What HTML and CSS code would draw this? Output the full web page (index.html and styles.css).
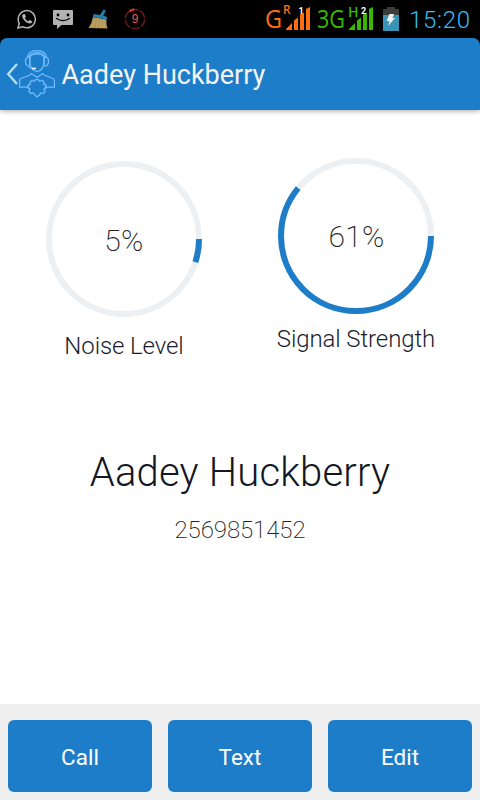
FILE: index.html
```html
<!DOCTYPE html>
<html lang="en">
<head>
    <meta charset="utf-8">
    <title>Aadey Huckberry</title>
    <link rel="stylesheet" href="styles.css">
</head>
<body>
    <div class="status-bar">
        <div class="notifications">
            <!-- WhatsApp -->
            <svg width="20" height="20" viewBox="0 0 20 20">
                <path d="M1 19l1.300-4.600A8.600 8.600 0 1 1 5.600 17.700z" fill="none" stroke="#b4b4b4" stroke-width="1.500"/>
                <path d="M6.600 4.900L5.200 6.300C4.900 10.200 9.500 14.800 13.500 14.600L15.200 13.200V12.200L12.700 10.900L11.400 12.200C9.700 11.600 8.600 10.500 7.900 8.900L8.900 7.700L7.900 5z" fill="#b4b4b4"/>
            </svg>
            <!-- Messaging -->
            <svg width="20" height="20" viewBox="0 0 20 20">
                <path d="M1 1h18a1 1 0 0 1 1 1v13a1 1 0 0 1-1 1H8.500L4 20V16H1a1 1 0 0 1-1-1V2a1 1 0 0 1 1-1z" fill="#b2b2b2"/>
                <circle cx="5" cy="6" r="1.400" fill="#000"/>
                <circle cx="15" cy="6" r="1.400" fill="#000"/>
                <path d="M3 9.300Q10 14 17 9.300" fill="none" stroke="#000" stroke-width="1.300"/>
            </svg>
            <!-- Cleaner -->
            <svg width="20" height="20" viewBox="0 0 20 20">
                <path d="M5 8L18.500 10.500Q18 15 19.500 19.500L.5 19Q4 14 5 8z" fill="#b09556"/>
                <path d="M7 10L4.500 18M10 10L8.500 19M13 11L12.500 19M16 11V19" stroke="#c9b074" stroke-width=".8"/>
                <path d="M5.500 5L12 6L15.500 .5L18 1.500L15.200 6.500L19 8V10.500L5 8z" fill="#2080b0"/>
            </svg>
            <!-- Counter -->
            <svg width="22" height="22" viewBox="0 0 22 22">
                <circle cx="11" cy="11" r="9.600" fill="none" stroke="#6e1719" stroke-width="1.500" stroke-dasharray="8.550 1.500"/>
                <path d="M5.500 3.400A9.600 9.600 0 0 1 10.200 1.400" fill="none" stroke="#e02a2a" stroke-width="2.400"/>
                <text class="counter" x="11" y="15" text-anchor="middle">9</text>
            </svg>
        </div>
        <div class="system">
            <svg width="112" height="38" viewBox="0 0 112 38">
                <g fill="#ff6e0e">
                    <text class="network" x="4" y="27.500" textLength="17" lengthAdjust="spacingAndGlyphs">G</text>
                    <text class="network-sup" x="22" y="14" textLength="7.500" lengthAdjust="spacingAndGlyphs">R</text>
                    <path d="M25 30V29L31 23V30zM33 30V20.500L37 17.500V30zM39 30V14.500L43 12.500V30zM45 30V9L49 7V30z"/>
                </g>
                <text class="sim" x="37.500" y="14">1</text>
                <g fill="#38b800">
                    <text class="network" x="56" y="27.500" textLength="28" lengthAdjust="spacingAndGlyphs">3G</text>
                    <text class="network-sup network-h" x="87" y="17" textLength="10.500" lengthAdjust="spacingAndGlyphs">H</text>
                    <path d="M88 30V29L94 23V30zM96 30V20.500L100 17.500V30zM102 30V14.500L106 12.500V30zM108 30V9L112 7V30z"/>
                </g>
                <text class="sim" x="100" y="14">2</text>
            </svg>
            <svg class="battery" width="16" height="24" viewBox="0 0 16 24">
                <path d="M4 0H12V2H16V24H0V2H4z" fill="#3c3c3c"/>
                <path d="M0 8H16V24H0z" fill="#3796b8"/>
                <path d="M6.500 7H11L9.500 11H12L5 19L6.500 14H3.500z" fill="#eef3f5"/>
            </svg>
            <span class="clock">15:20</span>
        </div>
    </div>

    <header class="action-bar">
        <svg class="back" width="12" height="24" viewBox="0 0 12 24">
            <path d="M11 2L2.200 12L11 22" fill="none" stroke="#b6def0" stroke-width="2.400"/>
        </svg>
        <svg class="logo" width="36" height="48" viewBox="0 0 36 48">
            <g fill="none" stroke="#72bcff" stroke-width="1.250">
                <path d="M11 9Q11 5 14.500 4.500Q18 3 21.500 4.500Q25 5 25 9V13C25 17 21.500 21.500 18 21.500S11 17 11 13z"/>
                <path d="M8.500 7.500C9 3 13 .7 18 .7S27 3 27.500 7.500"/>
                <path d="M10 8C10.500 4.500 13 2.500 18 2.500S25.500 4.500 26 8"/>
                <path d="M10.500 7.200H8.500Q6.500 8 6.500 11.500T9 16L11 15.500zM25.500 7.200H27.500Q29.500 8 29.500 11.500T27 16L25 15.500z"/>
                <path d="M9.500 16.500Q11 18.500 14 18.500"/>
                <path d="M10.500 37H.6V30.500Q.6 29 2 28.500L11 25L12.500 23.500L18 27.500L23.500 23.500L25 25L34 28.500Q35.400 29 35.400 30.500V37H25.500"/>
                <path d="M16.500 29.500H19.500L20.500 31.500L23 30.300L25 32L24.500 34L27 35V38L25 39L26 41.500L24 43.500L21.500 43L20.500 45L18 47L16 45L14.500 43L12 43.500L10 41.500L11 39L9 38V35L11.500 34L11 32L13 30.300L15.500 31.500z"/>
            </g>
            <path d="M13 18.500H17" stroke="#fff" stroke-width="1.600"/>
        </svg>
        <h1 class="title">Aadey Huckberry</h1>
    </header>

    <main class="content">
        <section class="gauges">
            <div class="gauge gauge-noise">
                <svg width="156" height="156" viewBox="0 0 156 156">
                    <circle class="track" cx="78" cy="78" r="75"/>
                    <circle class="progress" cx="78" cy="78" r="75" pathLength="100" stroke-dasharray="5 95"/>
                    <text class="value" x="78" y="90" text-anchor="middle">5%</text>
                </svg>
                <p class="caption">Noise Level</p>
            </div>
            <div class="gauge gauge-signal">
                <svg width="156" height="156" viewBox="0 0 156 156">
                    <circle class="track" cx="78" cy="78" r="75"/>
                    <circle class="progress" cx="78" cy="78" r="75" pathLength="100" stroke-dasharray="61 39"/>
                    <text class="value" x="78.500" y="89" text-anchor="middle">61%</text>
                </svg>
                <p class="caption">Signal Strength</p>
            </div>
        </section>
        <section class="contact">
            <h2 class="name">Aadey Huckberry</h2>
            <p class="phone">2569851452</p>
        </section>
    </main>

    <footer class="buttons">
        <button>Call</button>
        <button>Text</button>
        <button>Edit</button>
    </footer>
</body>
</html>
```
FILE: styles.css
```css
* {
    box-sizing: border-box;
}
body {
    margin: 0;
    height: 800px;
    display: flex;
    flex-direction: column;
    background: #000;
    font-family: Roboto, sans-serif;
    overflow: hidden;
}
h1, h2, p {
    margin: 0;
}
svg {
    display: block;
    flex: none;
}
.status-bar {
    height: 38px;
    flex: none;
    display: flex;
    justify-content: space-between;
    padding: 0 10px 0 17px;
}
.notifications {
    display: flex;
    align-items: center;
    gap: 15.6px;
}
.counter {
    font: 12px "Liberation Sans", sans-serif;
    fill: #ee5555;
}
.system {
    display: flex;
    align-items: center;
}
.system svg {
    overflow: visible;
}
.network {
    font-family: "Open Sans", sans-serif;
    font-size: 26px;
}
.network-sup {
    font-family: "Open Sans", sans-serif;
    font-size: 12px;
    font-weight: 600;
}
.network-h {
    font-size: 14px;
}
.sim {
    font-size: 9px;
    font-weight: bold;
    fill: #fff;
}
.battery {
    margin-left: 10px;
}
.clock {
    width: 61px;
    margin-left: 10px;
    color: #38bdf0;
    font-size: 24px;
    font-weight: 300;
    letter-spacing: 0.7px;
    line-height: 38px;
    padding-top: 1px;
}
.action-bar {
    height: 72px;
    flex: none;
    display: flex;
    align-items: center;
    padding-left: 6px;
    background: #1e7dc8;
    border-radius: 7px 7px 0 0;
    box-shadow: 0 1px 5px rgba(0,0,0,0.35);
    z-index: 1;
}
.logo {
    margin-left: 1px;
}
.title {
    margin-left: 6.500px;
    padding-top: 2px;
    color: #f3f3f3;
    font-size: 27px;
    font-weight: 400;
}
.content {
    flex: 1;
    background: #fff;
}
.gauges {
    display: flex;
    padding-top: 48px;
}
.gauge {
    display: flex;
    flex-direction: column;
    align-items: center;
}
.gauge-noise {
    width: 248px;
    padding-top: 3px;
}
.gauge-signal {
    width: 216px;
}
.track {
    fill: none;
    stroke: #ecf0f3;
    stroke-width: 6;
}
.progress {
    fill: none;
    stroke: #1e7dc8;
    stroke-width: 6;
}
.value {
    font-size: 30px;
    font-weight: 200;
    letter-spacing: 0.3px;
    fill: #222;
}
.caption {
    margin-top: 10px;
    font-size: 24px;
    line-height: 30px;
    font-weight: 300;
    letter-spacing: -0.1px;
    color: #1b1d2e;
}
.gauge-noise .caption {
    margin-top: 14px;
}
.contact {
    padding-top: 86px;
    text-align: center;
}
.name {
    font-size: 40px;
    line-height: 52px;
    font-weight: 300;
    letter-spacing: 0.2px;
    color: #141724;
}
.phone {
    margin-top: 16px;
    font-size: 24px;
    line-height: 30px;
    font-weight: 200;
    letter-spacing: -0.1px;
    color: #222;
}
.buttons {
    height: 96px;
    flex: none;
    display: flex;
    gap: 16px;
    padding: 16px 8px 8px;
    background: #eee;
}
.buttons button {
    flex: 1;
    border: none;
    border-radius: 6px;
    background: #1e7dc8;
    color: #fff;
    font-family: inherit;
    font-size: 22.5px;
    padding: 2px 0 0;
}
```
